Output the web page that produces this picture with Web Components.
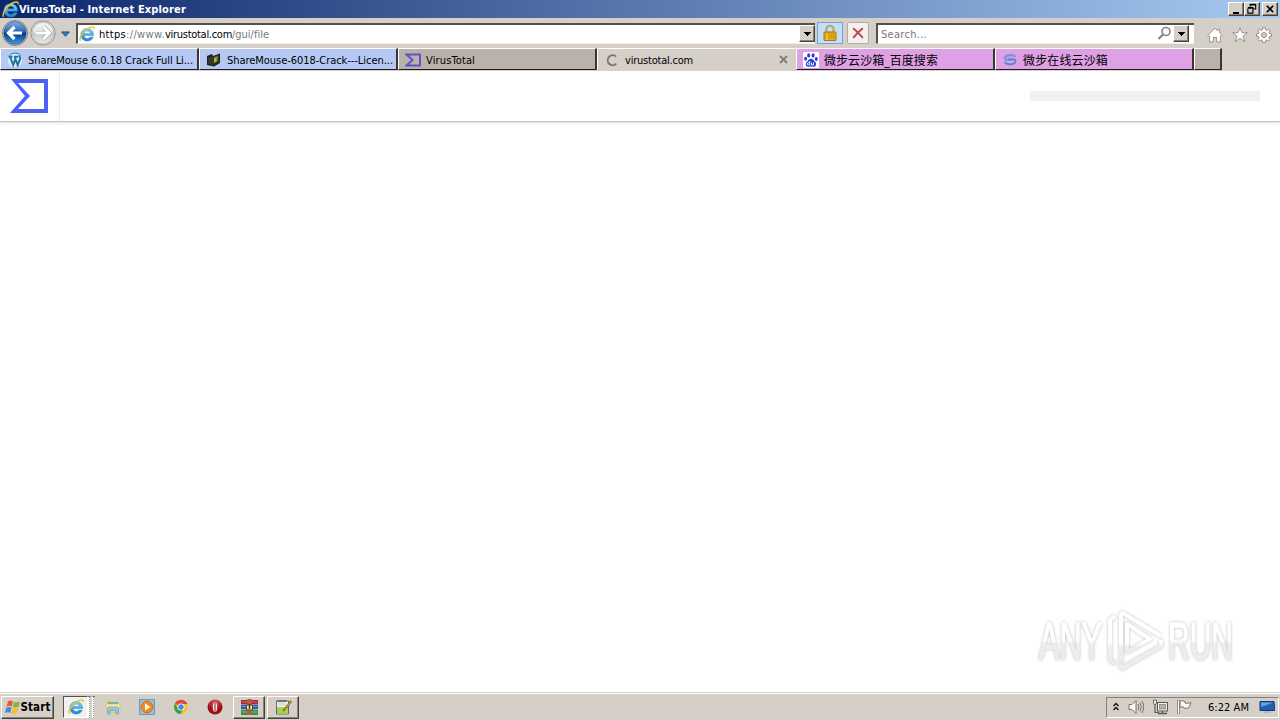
<!DOCTYPE html>
<html lang="en"><head><meta charset="utf-8"><title>VirusTotal - Internet Explorer</title>
<style>html,body{margin:0;width:1280px;height:720px;overflow:hidden;background:#fff}</style></head>
<body><desktop-screen></desktop-screen>
<script>
const define=(name,css,html,init)=>customElements.define(name,class extends HTMLElement{
  constructor(){super();this.attachShadow({mode:'open'})}
  connectedCallback(){
    if(this.shadowRoot.childNodes.length)return;
    const t=document.createElement('template');
    t.innerHTML='<style>*{box-sizing:border-box}svg{display:block;flex:none}'+css+'</style>'+(typeof html==='function'?html(this):html);
    this.shadowRoot.append(t.content.cloneNode(true));
    if(init)init(this);
  }
});

// Single-line label whose tracking is adjusted to fill the width given in "w".
define('ui-label',`:host{display:block;flex:none;white-space:pre;line-height:14px;height:14px}span{display:inline-block;line-height:14px}`,
 '<span><slot></slot></span>',el=>{
  const w=+el.getAttribute('w');if(!w)return;
  el.style.width=w+'px';
  const s=el.shadowRoot.querySelector('span'),n=el.textContent.length;
  s.style.letterSpacing=((w-s.getBoundingClientRect().width)/n)+'px';
});

const icons={
 ie:`<defs><linearGradient id="g" x2="0" y2="1"><stop stop-color="#7fd6fb"/><stop offset="1" stop-color="#1b7fd0"/></linearGradient></defs><path d="M14.6 9.6H5.2C5.4 11.6 6.7 12.5 8.4 12.5c1.3 0 2.2-.5 2.8-1.4h3.1c-.9 2.6-3.2 4-6 4-3.9 0-6.500-2.500-6.500-6.300 0-3.700 2.700-6.300 6.500-6.300 4 0 6.500 2.700 6.300 7.100zM5.300 7.400h5.900C11 5.800 9.900 5 8.300 5 6.700 5 5.600 5.800 5.300 7.400z" fill="url(#g)" stroke="#2383c4" stroke-width=".4"/><path d="M1.600 14.800C-.5 12.500 4 4.500 10.500 1.600c3.200-1.400 5-.8 4.600 1.500" fill="none" stroke="#efc22c" stroke-width="1.400"/>`,
 wp:`<circle cx="8" cy="8" r="7.300" fill="#d9ecf5"/><path d="M1.500 4.800h4M7 4.800h4M3 5l3.200 8L8.200 7.500M7.700 5l3 8 2.500-6c.5-1.500-1-2.300-.8-3.600" fill="none" stroke="#21759b" stroke-width="2"/><path d="M2.500 3.500a7.300 7.300 0 0 1 11 0" fill="none" stroke="#21759b"/>`,
 folder:`<path d="M1 4l5-2 1 2 7-2.500v9.500l-6 3.500L1 13z" fill="#1c211b"/><path d="M2 5.500L13 3v7l-6 3-5-1z" fill="#333a2d"/><path d="M8 6l3.500-2v5L8 11z" fill="#829f20"/><path d="M9 6v4" stroke="#d5d43c"/>`,
 vt:`<path d="M1.500 2.500H15v11H1.500L7.500 8z" fill="none" stroke="#5c56c5" stroke-width="2"/>`,
 vtbig:`<path d="M1 0H38V34H0L15 17zM8 4L20 17 8 30H34V4z" fill="#4c60f5" fill-rule="evenodd"/>`,
 spin:`<path d="M12.200 4.600A5 5 0 1 0 12.200 11.800" fill="none" stroke="#7b7772" stroke-width="2"/>`,
 baidu:`<rect width="16" height="16" rx="1.500" fill="#fff"/><g fill="#2c3fd9"><ellipse cx="5.700" cy="3.400" rx="1.500" ry="2.200"/><ellipse cx="10.100" cy="3.400" rx="1.500" ry="2.200"/><ellipse cx="2.600" cy="6.800" rx="1.500" ry="2"/><ellipse cx="13.300" cy="7" rx="1.500" ry="2"/><path d="M8 6.700c2 0 2.500 1.800 4 3 2 1.700 1.300 5-1.200 5-1.300 0-1.700-.3-2.800-.3s-1.500.3-2.800.3c-2.500 0-3.200-3.300-1.200-5 1.500-1.200 2-3 4-3z"/></g><path d="M6.700 9v4H5.500a1 1 0 0 1 0-2.300h1.200M8.500 10.500V13h2v-2.500" fill="none" stroke="#fff" stroke-width=".9"/>`,
 threat:`<path d="M13.500 4.700C10 2 3.500 3 3 6.300c-.1 1.300 1.300 1.600 3.500 1.600h4" fill="none" stroke="#7f8fdc" stroke-width="2.400"/><path d="M2.500 10.300c3 3 10.500 2.500 11-1.100.2-1.300-1-1.900-3-1.900H6" fill="none" stroke="#5b86d6" stroke-width="2"/>`,
 lock:`<path d="M4.500 8V4.500a3.500 3.500 0 0 1 7 0V8" fill="none" stroke="#958247" stroke-width="2"/><path d="M4.700 7V4.500a3.300 3.300 0 0 1 6.600 0V7" fill="none" stroke="#eedd91" stroke-width=".8"/><rect x="2" y="7" width="12" height="8.500" rx=".8" fill="#e9ad1d" stroke="#a9770d"/><path d="M3 9h10M3 11h10M3 13h10" stroke="#c48812" stroke-width=".8"/><path d="M5 8v7" stroke="#ffdb65"/>`,
 stop:`<path d="M2.500 2.500C7 6 9.500 9 13.500 13.500M13.500 2.500C9 6 6 9 2.500 13.500" fill="none" stroke="#bf4548" stroke-width="2.200"/>`,
 mag:`<circle cx="9" cy="5.500" r="4" fill="#f8f8f8" stroke="#8d8b89" stroke-width="1.700"/><path d="M6 8.500L1.500 13" stroke="#8d8b89" stroke-width="2.400"/>`,
 home:`<path d="M.8 8.300L8 1.200l2.700 2.700V2.500h2v3.500L15.200 8.300l-1.200 1.300-.6-.5V15H9.700v-4.500H6.300V15H2.600V9.100l-.6.5z" fill="#fff" stroke="#8f8b86" stroke-width=".9"/>`,
 star:`<path d="M8 .8l2 5h5.300l-4.200 3.300 1.600 5.500L8 11.400l-4.700 3.200 1.600-5.500L.7 5.800H6z" fill="#fff" stroke="#8f8b86" stroke-width=".9"/>`,
 gear:`<path d="M6.700.8h2.600l.4 2 1.200.5 1.700-1.200 1.500 1.600-1.200 1.700.5 1.100 2 .4v2.400l-2 .4-.5 1.200 1.200 1.700-1.500 1.500-1.700-1.100-1.200.5-.4 2H6.700l-.4-2-1.200-.5-1.700 1.100-1.500-1.500 1.200-1.700-.5-1.200-2-.4V6.900l2-.4.500-1.100-1.200-1.700 1.500-1.600 1.700 1.200 1.200-.5z" fill="#fff" stroke="#8f8b86"/><circle cx="8" cy="8.100" r="2.500" fill="#d5cfc8" stroke="#8f8b86"/>`,
 min:`<path d="M3 10h6" stroke="#000" stroke-width="2"/>`,
 restore:`<path d="M4.500 4V1.500h6v5H8M4.500 2h6M2 6v5h5.500V5H2M2 5.500h5.500" fill="none" stroke="#000" stroke-width="1.200"/>`,
 close:`<path d="M3 3l7 7M10 3l-7 7" stroke="#000" stroke-width="1.800"/>`,
 tabx:`<path d="M1 1l7 7M8 1L1 8" stroke="#827d77" stroke-width="1.900"/>`,
 down:`<path d="M0 0h7v1H6v1H5v1H4v1H3V3H2V2H1V1H0z"/>`,
 hist:`<path d="M.7.700h8.600L5 5.500z" fill="#2686c8" stroke="#1a4165"/>`,
 back:`<defs><linearGradient id="b" x2="0" y2="1"><stop stop-color="#86b2e5"/><stop offset=".46" stop-color="#2464b4"/><stop offset=".5" stop-color="#06337e"/><stop offset="1" stop-color="#39a1e9"/></linearGradient></defs><circle cx="13" cy="13" r="12.500" fill="#e2e4e6" stroke="#77797d"/><circle cx="13" cy="13" r="11.200" fill="url(#b)" stroke="#26528d" stroke-width=".7"/><path d="M12.500 7L6.500 13l6 6M7 13h13" fill="none" stroke="#fff" stroke-width="3.200"/>`,
 fwd:`<defs><linearGradient id="f" x2="0" y2="1"><stop stop-color="#f4f4f4"/><stop offset=".48" stop-color="#e4e4e4"/><stop offset=".5" stop-color="#c8c9cb"/><stop offset="1" stop-color="#e9e9e9"/></linearGradient></defs><circle cx="13" cy="13" r="12.200" fill="#e3e2e0" stroke="#93908d"/><circle cx="13" cy="13" r="10.800" fill="url(#f)" stroke="#c0bfbe"/><path d="M13.500 7l6 6-6 6M19 13H6" fill="none" stroke="#a6a6a6" stroke-width="4"/><path d="M13.500 7l6 6-6 6M19 13H6" fill="none" stroke="#fff" stroke-width="2.800"/>`,
 win:`<path d="M3 2.500C5 1 6.500 1.500 8 2.300L6.800 7.500C5 6.500 3.500 6.700 1.500 7.700z" fill="#e65b27"/><path d="M9 2.700c2 .9 4 .8 6-.5l-1.400 5.300c-2 1-3.800 1.200-5.800.4z" fill="#80b63d"/><path d="M1.200 8.700c2-1 3.500-1.100 5.300-.1L5.200 13.800C3.500 12.900 2 12.900 0 13.900z" fill="#438bd7"/><path d="M7.500 9c2 .8 3.800.6 5.800-.4L12 13.700c-2 1.100-3.900 1.300-5.800.5z" fill="#f6bd30"/>`,
 explorer:`<path d="M1 3l2-1h4l1 1h6v11H1z" fill="#e7c766"/><path d="M3 3h10v2H3z" fill="#69b98a"/><path d="M1 5h14v4H1z" fill="#f7e7a1" stroke="#d5b95b" stroke-width=".6"/><path d="M2.500 15V9.500Q2.500 8 4 8h8q1.500 0 1.500 1.500V15H11v-4H5v4z" fill="#91cdec" stroke="#5ba2cc" stroke-width=".7"/>`,
 media:`<rect x=".6" y=".6" width="14.800" height="14.800" fill="#95c7ea" stroke="#5698cb"/><circle cx="8" cy="8" r="5.900" fill="#f28a1b" stroke="#d96a0c"/><path d="M6 4.500v7L11.500 8z" fill="#fff"/>`,
 chrome:`<circle cx="8" cy="8" r="7" fill="#f1c530"/><path d="M8 8L1.900 4.500A7 7 0 0 1 14.500 5H8z" fill="#de4939"/><path d="M1.900 4.500A7 7 0 0 0 7.500 15l3-5.300L5.400 9.800z" fill="#37a24f"/><circle cx="8" cy="8" r="3.500" fill="#fff"/><circle cx="8" cy="8" r="2.700" fill="#4587e8"/>`,
 opera:`<defs><radialGradient id="o" cy=".2"><stop stop-color="#e9616a"/><stop offset="1" stop-color="#a30c12"/></radialGradient></defs><circle cx="8" cy="8" r="7.500" fill="url(#o)"/><ellipse cx="8" cy="8" rx="2.600" ry="5" fill="#f7eeee" stroke="#7c080d" stroke-width=".6"/><path d="M8 4v8" stroke="#a14a4c" stroke-width="1.300"/>`,
 rar:`<path d="M0 1h17v4H0z" fill="#a92636"/><path d="M0 5.500h17v4.800H0z" fill="#345baf"/><path d="M0 11h17v5H0z" fill="#3b923e"/><path d="M1 3h15M1 7.500h15M1 13h15" stroke="#fff" stroke-opacity=".35"/><path d="M6.500 0h4v16h-4z" fill="#b95a40"/><path d="M5.500 6h6v5h-6z" fill="#eee1b5" stroke="#5b4124"/><path d="M8.500 5v5" stroke="#4b3728" stroke-width="1.500"/>`,
 note:`<path d="M1.500 2h12v13h-12z" fill="#fbfbf6" stroke="#656962"/><path d="M2 8h11v6.500H2z" fill="#a7d04b"/><path d="M3 4h8M3 6h8" stroke="#b0c5cc"/><path d="M3 1v2M5 1v2M7 1v2M9 1v2M11 1v2" stroke="#454545"/><path d="M15.500 1.500L9 10l-1 2 2-1L16.500 3z" fill="#e7a938" stroke="#63491e" stroke-width=".7"/>`,
 chev:`<path d="M.5 4L3 1.500 5.500 4M.5 8L3 5.500 5.500 8" fill="none" stroke="#111" stroke-width="1.300"/>`,
 sound:`<path d="M1 5.500h3l4-4v13l-4-4H1z" fill="#f8f7f5" stroke="#77736f"/><path d="M10 5q1.500 3 0 6M12 3.500q2.600 4.500 0 9M14 2q3.500 6 0 12" fill="none" stroke="#77736f"/>`,
 net:`<rect x="5.500" y="3.500" width="10" height="8.500" fill="#f2f0ed" stroke="#5c5955"/><rect x="7.500" y="5.500" width="6" height="4.500" fill="#b5b2ad" stroke="#8a8783" stroke-width=".8"/><path d="M6 14.500h9M10.500 12v2.500" stroke="#5c5955" stroke-width="1.300"/><path d="M1.500 1v3q0 1.500 1.500 1.500t1.500-1.500V1z" fill="#f5f4f2" stroke="#5c5955" stroke-width=".9"/><path d="M3 5.500v8h4" fill="none" stroke="#5c5955" stroke-width="1.200"/>`,
 flag:`<path d="M2.500 1v14" stroke="#77736f" stroke-width="2.500"/><path d="M2.500 1.500v13" stroke="#fff"/><path d="M4 2c2-.7 3.500.2 5 .7v1.300c2 .5 3.500.3 6-.4l-2 5c-2 1-4 .7-5.500.1V8C6 7.500 5 8 4 8.500z" fill="#f7f6f4" stroke="#77736f"/>`,
 monitor:`<path d="M1 2.500h14l1 9H1z" fill="#1e5fae" stroke="#123e75"/><path d="M2 3.500h12L2 8z" fill="#5ca6e8"/><path d="M5 12h6l1 2H4z" fill="#a9b9c7"/>`
};
define('ui-icon',':host{display:block;flex:none}',el=>{
 const w=el.getAttribute('w')||16,h=el.getAttribute('h')||w,v=el.getAttribute('box')||'0 0 16 16';
 return `<svg width="${w}" height="${h}" viewBox="${v}">${icons[el.getAttribute('name')]}</svg>`});

define('raised-button',`:host{display:flex;flex:none;box-sizing:border-box;align-items:center;justify-content:center;background:#d5cfc8;border:1px solid;border-color:#fff #45413d #45413d #fff;box-shadow:inset -1px -1px #85817b}`,'<slot></slot>');

define('title-bar',`:host{display:flex;height:18px;align-items:center;padding:0 2px;background:linear-gradient(90deg,#0b266b,#a6caf0);color:#fff;font:bold 11px "DejaVu Sans Condensed","DejaVu Sans",sans-serif}
ui-label{margin-top:1px}.sp{flex:1}raised-button{width:16px;height:14px}.c{margin-left:2px}`,
`<ui-icon name="ie" w="17"></ui-icon><ui-label w="167">VirusTotal - Internet Explorer</ui-label><div class="sp"></div>
<raised-button><ui-icon name="min" w="12" box="0 0 12 12"></ui-icon></raised-button><raised-button><ui-icon name="restore" w="12" box="0 0 13 13"></ui-icon></raised-button><raised-button class="c"><ui-icon name="close" w="12" box="0 0 13 13"></ui-icon></raised-button>`);

define('nav-bar',`:host{display:flex;height:30px;align-items:center;background:#d5cfc8;padding:0 7px 0 2px;color:#777}
.hist{margin:1px 6px 0 5px}.field{display:flex;align-items:center;height:21px;background:#fff;border-top:2px solid #55504b;border-left:2px solid #55504b;border-bottom:1px solid #eeece8;flex:none}
.url{width:739px;padding-left:1px}.url .txt{display:flex;margin-left:4px}.field ui-label{position:relative;top:1px}.d{color:#000}.sp{flex:1}
raised-button{width:16px;height:17px}.btn{width:26px;height:22px;display:grid;place-items:center;margin-left:2px;border:1px solid #73a5dd;background:#c4def6;flex:none}.x{width:22px;margin-left:4px;border-color:#aeabaa;background:#f3f1ef;border-radius:2px}
.search{width:318px;margin-left:7px;padding:0 5px 0 3px}.search raised-button{margin-left:1px}.g{margin-left:13px;margin-top:4px}.g2{margin-left:8.500px;margin-top:4px}`,
`<ui-icon name="back" w="26" box="0 0 26 26"></ui-icon><ui-icon name="fwd" w="26" box="0 0 26 26" style="margin-left:2px"></ui-icon><ui-icon class="hist" name="hist" w="9" h="6" box="0 0 10 6"></ui-icon>
<div class="field url"><ui-icon name="ie"></ui-icon><div class="txt"><ui-label class="d" w="27">https</ui-label><ui-label w="39">://www.</ui-label><ui-label class="d" w="67">virustotal.com</ui-label><ui-label w="37">/gui/file</ui-label></div><div class="sp"></div><raised-button><ui-icon name="down" w="7" h="4" box="0 0 7 4"></ui-icon></raised-button></div>
<div class="btn"><ui-icon name="lock"></ui-icon></div><div class="btn x"><ui-icon name="stop" w="14"></ui-icon></div>
<div class="field search"><ui-label w="46">Search...</ui-label><div class="sp"></div><ui-icon name="mag" w="15" box="0 0 15 15"></ui-icon><raised-button><ui-icon name="down" w="7" h="4" box="0 0 7 4"></ui-icon></raised-button></div>
<ui-icon class="g" name="home"></ui-icon><ui-icon class="g2" name="star"></ui-icon><ui-icon class="g2" name="gear"></ui-icon>`);

define('browser-tab',`:host{display:flex;box-sizing:border-box;flex:none;width:199px;height:22px;align-items:center;padding:1px 10px 0 6px;color:#000;background:var(--tab,#b9b1aa);border:1px solid;border-width:1px 2px 1px 1px;border-color:#fff #393531 #15110f #fff}
:host([active]){background:#d5cfc8;border-bottom-color:#d5cfc8;border-right-color:#d5cfc8;padding-right:6px}:host([blank]){width:28px}ui-label{margin-left:5px;position:relative;top:1px}.sp{flex:1}`,
el=>el.hasAttribute('blank')?'':`<ui-icon name="${el.getAttribute('icon')}"></ui-icon><ui-label w="${el.getAttribute('w')}">${el.getAttribute('label')}</ui-label><div class="sp"></div>${el.hasAttribute('active')?'<ui-icon name="tabx" w="9" box="0 0 9 9"></ui-icon>':''}`);

define('tab-strip',`:host{display:flex;height:23px;background:#d5cfc8}.b{--tab:#b5c9f4}.p{--tab:#dfa0e5;font-size:12px}`,
`<browser-tab class="b" icon="wp" w="165" label="ShareMouse 6.0.18 Crack Full Li..."></browser-tab><browser-tab class="b" icon="folder" w="166" label="ShareMouse-6018-Crack---Licen..."></browser-tab><browser-tab icon="vt" w="49" label="VirusTotal"></browser-tab><browser-tab active icon="spin" w="68" label="virustotal.com"></browser-tab><browser-tab class="p" icon="baidu" w="114" label="微步云沙箱_百度搜索"></browser-tab><browser-tab class="p" icon="threat" w="85" label="微步在线云沙箱"></browser-tab><browser-tab blank></browser-tab>`);

define('any-run-mark',`:host{display:block;position:absolute;right:38px;bottom:18px;filter:drop-shadow(0 0 1.500px #bdbdbd)}
svg{overflow:visible}text{font:400 51px "Liberation Sans Narrow","Liberation Sans",sans-serif;stroke-width:1.500}`,
`<svg width="206" height="68" viewBox="0 0 206 68" stroke-linejoin="round"><defs><linearGradient id="m" gradientUnits="userSpaceOnUse" x1="0" x2="0" y1="0" y2="68"><stop offset=".5" stop-color="#fff"/><stop offset=".56" stop-color="#ededed"/></linearGradient></defs>
<text x="3" y="53" textLength="63" lengthAdjust="spacingAndGlyphs" fill="url(#m)" stroke="url(#m)">ANY</text>
<path transform="translate(71,3)" fill="none" d="M8 7L3 11V51L9 55M14 3V53M14 3L54 27M20 15V43L43 30zM14 60L54 37V31M14 54V60" stroke="url(#m)" stroke-width="4"/>
<text x="132" y="53" textLength="65" lengthAdjust="spacingAndGlyphs" fill="url(#m)" stroke="url(#m)">RUN</text></svg>`);

define('web-page',`:host{display:block;position:relative;flex:1;background:#fff}header{height:51px;display:flex;align-items:center;border-bottom:1px solid #c3c3c3;box-shadow:0 1px 3px #ddd;padding-right:20px}.logo{width:60px;height:50px;padding:8px 0 0 10px;border-right:1px solid #ececec}.sp{flex:1}.bar{width:230px;height:10px;background:#f2f2f2}`,
`<header><div class="logo"><ui-icon name="vtbig" w="38" h="34" box="0 0 38 34"></ui-icon></div><div class="sp"></div><div class="bar"></div></header><any-run-mark></any-run-mark>`);

define('task-bar',`:host{display:flex;height:28px;box-sizing:border-box;background:#d5cfc8;border-top:1px solid #d5cfc8;box-shadow:inset 0 1px #fff;padding:1px 1px 0 1px;align-items:center;color:#000}
.start{width:53px;height:23px;font-weight:bold}.start ui-label{font-size:11.500px}.ie{display:flex;align-items:center;margin-left:9px;width:25px;height:22px;padding-left:4px;background:#f3f1ee;border:1px solid;border-color:#55514d #fff #fff #55514d}
.pair{display:flex;gap:2px;width:7px;height:22px;border-top:1px dashed #77736d}.pair i{width:2px;background:#fff;border-right:1px dotted #99958f}.q{margin-left:18px}.task{width:32px;height:23px;margin-left:2px}.first{margin-left:10px}.sp{flex:1}
.tray{display:flex;align-items:center;width:173px;height:21px;padding:0 3px 0 6px;border:1px solid;border-color:#85817b #fff #fff #85817b}`,
`<raised-button class="start"><ui-icon name="win"></ui-icon><ui-label w="30">Start</ui-label></raised-button><div class="ie"><ui-icon name="ie"></ui-icon></div><div class="pair"><i></i><i></i></div>
<ui-icon name="explorer" style="margin-left:10px"></ui-icon><ui-icon class="q" name="media"></ui-icon><ui-icon class="q" name="chrome"></ui-icon><ui-icon class="q" name="opera"></ui-icon>
<raised-button class="task first"><ui-icon name="rar" w="17" box="0 0 17 17"></ui-icon></raised-button><raised-button class="task"><ui-icon name="note" w="17" box="0 0 17 17"></ui-icon></raised-button><div class="sp"></div>
<div class="tray"><ui-icon name="chev" w="6" h="9" box="0 0 6 9" style="margin-top:-2px"></ui-icon><ui-icon name="sound" style="margin-left:9px"></ui-icon><ui-icon name="net" style="margin-left:8px"></ui-icon><ui-icon name="flag" style="margin-left:8px"></ui-icon><ui-label w="41" style="margin-left:16px;margin-top:1px">6:22 AM</ui-label><div class="sp"></div><ui-icon name="monitor"></ui-icon></div>`);

define('desktop-screen',`:host{display:flex;flex-direction:column;width:1280px;height:720px;overflow:hidden;font:11px "DejaVu Sans Condensed","DejaVu Sans","Noto Sans CJK SC",sans-serif}`,
'<title-bar></title-bar><nav-bar></nav-bar><tab-strip></tab-strip><web-page></web-page><task-bar></task-bar>');
</script></body></html>
